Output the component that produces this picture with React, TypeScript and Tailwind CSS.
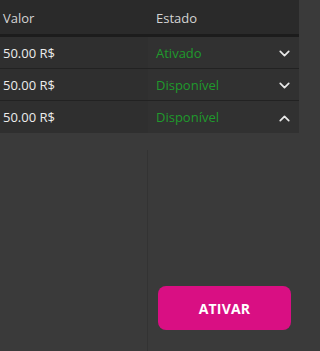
import React from 'react';
import { ChevronDown, ChevronUp } from 'lucide-react';

const rows = [
  { valor: '50.00 R$', estado: 'Ativado', open: false },
  { valor: '50.00 R$', estado: 'Disponível', open: false },
  { valor: '50.00 R$', estado: 'Disponível', open: true },
];

export default function App() {
  return (
    <div className="min-h-screen w-full bg-[#3a3a3a]">
      <div
        className="h-screen w-[299px] flex flex-col bg-[#3a3a3a] text-[13px]"
        style={{ fontFamily: '"Open Sans", "Liberation Sans", sans-serif' }}
      >
        {/* Header */}
        <div className="flex h-[37px] bg-[#2a2a2a] border-b-[3px] border-[#1c1c1c] text-[#d4d4d4]">
          <div className="w-[148px] pl-[3px] pt-[3px] flex items-center">Valor</div>
          <div className="w-[151px] pl-[8px] pt-[3px] flex items-center">Estado</div>
        </div>

        {/* Rows */}
        {rows.map((r, i) => (
          <div
            key={i}
            className={`flex h-[32px] bg-[#303030] ${i < rows.length - 1 ? 'border-b border-[#222]' : ''}`}
          >
            <div className="w-[148px] pl-[3px] pt-[2px] flex items-center text-[#ececec] bg-[#2f2f2f]">
              {r.valor}
            </div>
            <div className="w-[151px] pl-[8px] pr-[6px] pt-[2px] flex items-center justify-between text-[#1f9a2c] bg-[#313131]">
              <span>{r.estado}</span>
              {r.open ? (
                <ChevronUp size={17} strokeWidth={2.4} className="text-[#e8e8e8]" />
              ) : (
                <ChevronDown size={17} strokeWidth={2.4} className="text-[#e8e8e8]" />
              )}
            </div>
          </div>
        ))}

        {/* Body */}
        <div className="flex-1 flex pt-[17px]">
          <div className="w-[148px] border-r border-[#333]" />
          <div className="w-[151px] flex flex-col justify-end pl-[10px] pr-[8px] pb-[21px]">
            <button className="h-[44px] w-[133px] rounded-[8px] bg-[#d90f83] text-white font-bold text-[14px] tracking-[0.2px]">
              ATIVAR
            </button>
          </div>
        </div>
      </div>
    </div>
  );
}
